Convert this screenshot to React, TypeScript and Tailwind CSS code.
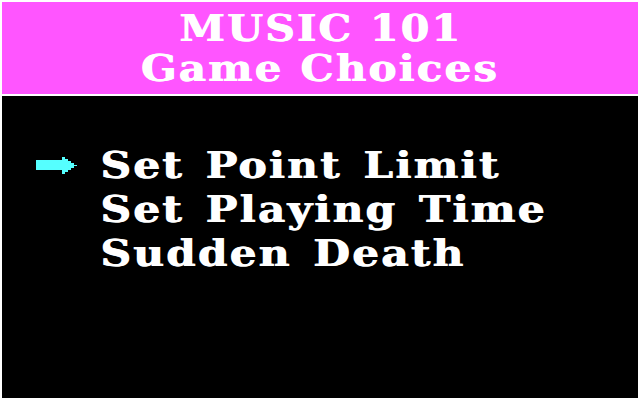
const choices = ['Set Point Limit', 'Set Playing Time', 'Sudden Death']

function Pointer() {
  return (
    <svg width="42" height="20" viewBox="0 0 42 20" className="block" shapeRendering="crispEdges">
      <path d="M0 5h26V2h3v2h3v2h3v2h3v2h3v1h-3v2h-3v2h-3v2h-3v2h-3v-4H0z" fill="#55ffff" />
    </svg>
  )
}

export default function App() {
  const selected = 0

  return (
    <div className="w-[640px] h-[400px] bg-white p-[2px] flex flex-col gap-[2px] font-['DejaVu_Serif',serif] font-bold text-white">
      <div className="h-[92px] bg-[#ff55ff] pt-[6px] flex flex-col items-center text-[37px] leading-[40px] tracking-[2px]">
        <div className="scale-x-[1.11] [text-shadow:1px_0_0_#fff]">MUSIC 101</div>
        <div className="scale-x-[1.13] [text-shadow:1px_0_0_#fff]">Game Choices</div>
      </div>

      <div className="flex-1 bg-black pt-[47px]">
        {choices.map((c, i) => (
          <div key={c} className="flex items-center h-[44px]">
            <div className="w-[98px] pl-[34px] flex items-center">
              {i === selected && <Pointer />}
            </div>
            <span className="inline-block origin-left scale-x-[1.14] text-[37px] leading-[44px] tracking-[2px] [word-spacing:4px] [text-shadow:1px_0_0_#fff]">
              {c}
            </span>
          </div>
        ))}
      </div>
    </div>
  )
}
